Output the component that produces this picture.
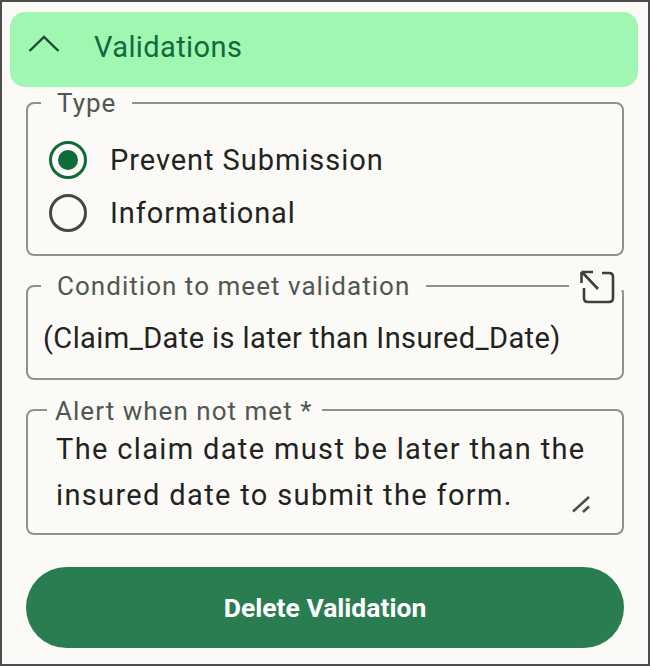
<script>
	let type = 'prevent';
</script>

<div class="panel">
	<div class="header">
		<svg class="chevron" width="32" height="20" viewBox="0 0 32 20" aria-hidden="true">
			<path d="M1.5 17 L16 3 L30.5 17" />
		</svg>
		<span>Validations</span>
	</div>

	<fieldset class="type">
		<legend>Type</legend>
		<div class="option">
			<span class="radio selected"><i></i></span>
			<span>Prevent Submission</span>
		</div>
		<div class="option">
			<span class="radio"></span>
			<span>Informational</span>
		</div>
	</fieldset>

	<div class="condition-wrap">
		<fieldset class="condition">
			<legend>Condition to meet validation</legend>
			<div class="value">(Claim_Date is later than Insured_Date)</div>
		</fieldset>
		<span class="expand">
			<svg width="38" height="38" viewBox="0 0 38 38" aria-hidden="true">
				<path d="M24 4 H31 Q35 4 35 8 V29 Q35 33 31 33 H10 Q6 33 6 29 V19" />
				<path d="M4 3 L20 20 M3.5 3 H15 M3.5 3 V14" />
			</svg>
		</span>
	</div>

	<fieldset class="alert">
		<legend>Alert when not met *</legend>
		<div class="message">The claim date must be later than the insured date to submit the form.</div>
		<svg class="grip" width="20" height="18" viewBox="0 0 20 18" aria-hidden="true">
			<path d="M1 15.5 L17 1 M11 16 L17 10.5" />
		</svg>
	</fieldset>

	<button>Delete Validation</button>
</div>

<style>
	:global(body) {
		margin: 0;
	}

	.panel {
		box-sizing: border-box;
		width: 650px;
		height: 666px;
		padding: 10px 10px 0 8px;
		border: 2px solid #4d4d4d;
		background: #fbfaf6;
		font-family: Roboto, sans-serif;
		color: #1f2321;
		overflow: hidden;
	}

	.header {
		display: flex;
		align-items: center;
		height: 75px;
		padding-left: 18px;
		border-radius: 15px;
		background: #a0f7b2;
		color: #0f6b3a;
		font-size: 29px;
		letter-spacing: 0.4px;
	}

	.header span {
		margin-left: 34px;
		margin-top: -6px;
	}

	.chevron {
		margin-top: -12px;
	}

	.chevron path {
		fill: none;
		stroke: #1f4a35;
		stroke-width: 2.4;
	}

	fieldset {
		box-sizing: border-box;
		margin: 0 14px 0 16px;
		border: 2px solid #8e918c;
		border-radius: 8px;
		padding: 0 16px;
		min-width: 0;
		position: relative;
	}

	legend {
		padding: 0 16px;
		font-size: 26px;
		line-height: 30px;
		letter-spacing: 1.03px;
		color: #4f5753;
	}

	.type {
		height: 168px;
		margin-top: 1px;
		padding-top: 15px;
		padding-left: 21px;
	}

	.type legend {
		margin-left: -8px;
	}

	.option {
		display: flex;
		align-items: center;
		gap: 23px;
		height: 53px;
		font-size: 29px;
		letter-spacing: 0.95px;
	}

	.radio {
		box-sizing: border-box;
		width: 38px;
		height: 38px;
		border: 3px solid #454845;
		border-radius: 50%;
		display: flex;
		align-items: center;
		justify-content: center;
	}

	.radio.selected {
		border-color: #0f6b3a;
	}

	.radio i {
		width: 20px;
		height: 20px;
		border-radius: 50%;
		background: #0f6b3a;
	}

	.condition-wrap {
		position: relative;
		margin-top: 15px;
	}

	.condition {
		height: 109px;
		padding-left: 15px;
	}

	.condition legend {
		margin-left: -2px;
	}

	.value {
		margin-top: 17px;
		font-size: 29px;
		line-height: 40px;
		letter-spacing: 0.42px;
		white-space: nowrap;
	}

	.expand {
		position: absolute;
		right: 13px;
		top: 1px;
		width: 56px;
		height: 18px;
		background: #fbfaf6;
	}

	.expand svg {
		position: absolute;
		left: 9px;
		top: -3px;
	}

	.expand path {
		fill: none;
		stroke: #3c403d;
		stroke-width: 2.6;
	}

	.alert {
		height: 141px;
		margin-top: 14px;
		padding: 0 16px 0 28px;
	}

	.alert legend {
		margin-left: -9px;
		padding: 2px 10px 0 8px;
	}

	.message {
		font-size: 29px;
		line-height: 46px;
		letter-spacing: 1.35px;
	}

	.grip {
		position: absolute;
		right: 30px;
		bottom: 19px;
	}

	.grip path {
		fill: none;
		stroke: #4a4d4a;
		stroke-width: 2.6;
	}

	button {
		display: block;
		box-sizing: border-box;
		width: 598px;
		height: 81px;
		margin: 32px 0 0 16px;
		border: none;
		border-radius: 41px;
		background: #2a7d50;
		color: #fff;
		font-family: Roboto, sans-serif;
		font-size: 26.5px;
		font-weight: 700;
	}
</style>
